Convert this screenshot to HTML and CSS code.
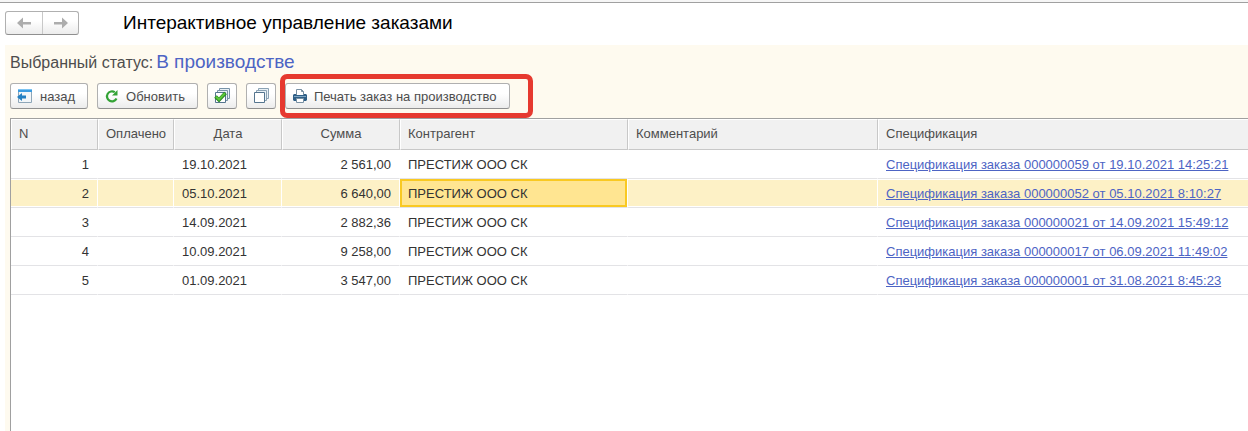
FILE: index.html
```html
<!DOCTYPE html>
<html lang="ru">
<head>
    <meta charset="UTF-8">
    <meta name="viewport" content="width=device-width, initial-scale=1.0">
    <title>Интерактивное управление заказами</title>
    <link rel="stylesheet" href="styles.css">
</head>
<body>
    <div class="tab-strip"></div>
    <header class="title-bar">
        <div class="nav">
            <button type="button" class="nav-btn" aria-label="Назад">
                <svg width="14" height="12" viewBox="0 0 14 12"><path d="M0 6L6 .5V5h8v2.500H6v4z" fill="#adadad"/></svg>
            </button>
            <button type="button" class="nav-btn" aria-label="Вперед">
                <svg width="14" height="12" viewBox="0 0 14 12"><path d="M14 6L8 .5V5H0v2.500h8v4z" fill="#adadad"/></svg>
            </button>
        </div>
        <h1>Интерактивное управление заказами</h1>
    </header>

    <main class="panel">
        <div class="status">
            <span>Выбранный статус:</span>
            <span class="status-value">В производстве</span>
        </div>

        <div class="toolbar">
            <button type="button" class="btn btn-back">
                <svg width="16" height="16" viewBox="0 0 16 16">
                    <path d="M1.500 3v11.500h13V3" fill="#f2f6f9" stroke="#8ea6b8"/>
                    <path d="M1 1h14v3H1z" fill="#3b9be0"/>
                    <path d="M1 1h14v1H1z" fill="#7cc4f2"/>
                    <path d="M0 9l5-4v2.500h4v3H5V13z" fill="#237fc2"/>
                </svg>
                назад
            </button>
            <button type="button" class="btn btn-refresh">
                <svg width="14" height="14" viewBox="0 0 14 14">
                    <path d="M9.800 3.200A5 5 0 1 0 11.500 9.500" fill="none" stroke="#34a336" stroke-width="2.200"/>
                    <path d="M12.500 1v5.500H7z" fill="#34a336"/>
                </svg>
                Обновить
            </button>
            <button type="button" class="btn btn-icon" aria-label="Установить флажки">
                <svg width="18" height="18" viewBox="0 0 18 18">
                    <g fill="#e9f1f6" stroke="#7893a8">
                        <path d="M6.500 1.500h10v10h-10z"/>
                        <path d="M4.500 3.500h10v10h-10z"/>
                        <path d="M2.500 5.500h10v10h-10z" fill="#fff" stroke="#55758f"/>
                    </g>
                    <path d="M2.500 9.500l3.500 3.500 6.500-7" fill="none" stroke="#268522" stroke-width="3.600"/>
                    <path d="M3 9.800l3 2.700 6-6.200" fill="none" stroke="#5cc93a" stroke-width="2"/>
                </svg>
            </button>
            <button type="button" class="btn btn-icon" aria-label="Снять флажки">
                <svg width="18" height="18" viewBox="0 0 18 18">
                    <g fill="#e9f1f6" stroke="#8ba2b4">
                        <path d="M6.500 1.500h10v10h-10z"/>
                        <path d="M4.500 3.500h10v10h-10z"/>
                        <path d="M2.500 5.500h10v10h-10z" fill="#fff" stroke="#55758f"/>
                    </g>
                </svg>
            </button>
            <div class="marked">
                <button type="button" class="btn btn-print">
                    <svg width="14" height="14" viewBox="0 0 14 14">
                        <path d="M3.500 6V.5h5l2 2V6" fill="#fff" stroke="#7890a3"/>
                        <path d="M8.500.5v2h2" fill="none" stroke="#7890a3"/>
                        <path d="M1 5h2v1h8V5h2l1 1v5l-1 1H1l-1-1V6z" fill="#2f5f86"/>
                        <path d="M1 7h12v1H1z" fill="#7ea6c4"/>
                        <path d="M3.500 9.500h7v4h-7z" fill="#fff" stroke="#7890a3"/>
                    </svg>
                    Печать заказ на производство
                </button>
            </div>
        </div>

        <div class="grid">
            <table class="orders">
                <colgroup>
                    <col class="col-n">
                    <col class="col-paid">
                    <col class="col-date">
                    <col class="col-sum">
                    <col class="col-agent">
                    <col class="col-comment">
                    <col>
                </colgroup>
                <thead>
                    <tr>
                        <th>N</th>
                        <th>Оплачено</th>
                        <th class="center">Дата</th>
                        <th class="center">Сумма</th>
                        <th>Контрагент</th>
                        <th>Комментарий</th>
                        <th>Спецификация</th>
                    </tr>
                </thead>
                <tbody>
                    <tr>
                        <td class="num">1</td>
                        <td></td>
                        <td>19.10.2021</td>
                        <td class="num">2 561,00</td>
                        <td>ПРЕСТИЖ ООО СК</td>
                        <td></td>
                        <td><a href="#">Спецификация заказа 000000059 от 19.10.2021 14:25:21</a></td>
                    </tr>
                    <tr class="selected">
                        <td class="num">2</td>
                        <td></td>
                        <td>05.10.2021</td>
                        <td class="num">6 640,00</td>
                        <td class="current">ПРЕСТИЖ ООО СК</td>
                        <td></td>
                        <td><a href="#">Спецификация заказа 000000052 от 05.10.2021 8:10:27</a></td>
                    </tr>
                    <tr>
                        <td class="num">3</td>
                        <td></td>
                        <td>14.09.2021</td>
                        <td class="num">2 882,36</td>
                        <td>ПРЕСТИЖ ООО СК</td>
                        <td></td>
                        <td><a href="#">Спецификация заказа 000000021 от 14.09.2021 15:49:12</a></td>
                    </tr>
                    <tr>
                        <td class="num">4</td>
                        <td></td>
                        <td>10.09.2021</td>
                        <td class="num">9 258,00</td>
                        <td>ПРЕСТИЖ ООО СК</td>
                        <td></td>
                        <td><a href="#">Спецификация заказа 000000017 от 06.09.2021 11:49:02</a></td>
                    </tr>
                    <tr>
                        <td class="num">5</td>
                        <td></td>
                        <td>01.09.2021</td>
                        <td class="num">3 547,00</td>
                        <td>ПРЕСТИЖ ООО СК</td>
                        <td></td>
                        <td><a href="#">Спецификация заказа 000000001 от 31.08.2021 8:45:23</a></td>
                    </tr>
                </tbody>
            </table>
        </div>
    </main>
</body>
</html>
```
FILE: styles.css
```css
* {
    box-sizing: border-box;
}

body {
    margin: 0;
    min-height: 100vh;
    display: flex;
    flex-direction: column;
    background: #fff;
    color: #333;
    font-family: "Liberation Sans", Arial, sans-serif;
    font-size: 13px;
}

.tab-strip {
    height: 3px;
    background: #f6f6f6;
    border-bottom: 1px solid #a0a0a0;
}

.title-bar {
    display: flex;
    align-items: center;
    gap: 44px;
    height: 42px;
    padding: 0 5px 2px;
}

.title-bar h1 {
    margin: 0;
    color: #000;
    font-size: 19px;
    font-weight: normal;
}

.nav {
    display: flex;
    height: 24px;
    border: 1px solid #b0b0b0;
    border-bottom-color: #8f8f8f;
    border-radius: 3px;
    background: linear-gradient(#fff 40%, #ececec);
}

.nav-btn {
    display: flex;
    align-items: center;
    justify-content: center;
    width: 36px;
    padding: 0;
    border: 0;
    background: none;
}

.nav-btn + .nav-btn {
    border-left: 1px solid #c8c8c8;
}

.panel {
    flex: 1;
    display: flex;
    flex-direction: column;
    margin-left: 5px;
    padding-left: 5px;
    background: #fefaef;
}

.status {
    display: flex;
    align-items: baseline;
    gap: 3px;
    padding-top: 5px;
    line-height: 24px;
    color: #4d4d4d;
    font-size: 16px;
}

.status-value {
    color: #4d64c4;
    font-size: 19px;
}

.toolbar {
    display: flex;
    gap: 9px;
    padding: 8px 0 9px;
}

.btn {
    display: flex;
    align-items: center;
    gap: 7px;
    height: 26px;
    padding: 0 13px 0 7px;
    border: 1px solid #b0b0b0;
    border-bottom-color: #8f8f8f;
    border-radius: 3px;
    background: linear-gradient(#fff 40%, #ececec);
    color: #4d4d4d;
    font: 13px "Liberation Sans", Arial, sans-serif;
    white-space: nowrap;
}

.btn-back {
    padding: 0 12px 0 6px;
}

.btn-refresh {
    padding-right: 12px;
}

.btn-icon {
    justify-content: center;
    width: 30px;
    padding: 0;
}

.marked {
    position: relative;
}

/* red frame around the print button */
.marked::after {
    content: "";
    position: absolute;
    inset: -9px -23px -9px -5px;
    border: 5px solid #e6392f;
    border-radius: 7px;
    pointer-events: none;
}

.grid {
    flex: 1;
    border-top: 1px solid #a0a0a0;
    border-left: 1px solid #a0a0a0;
    background: #fff;
}

.orders {
    width: 100%;
    table-layout: fixed;
    border-collapse: separate;
    border-spacing: 0;
}

.col-n { width: 87px; }
.col-paid { width: 76px; }
.col-date { width: 108px; }
.col-sum { width: 118px; }
.col-agent { width: 228px; }
.col-comment { width: 250px; }

.orders th {
    height: 31px;
    padding: 0 7px 2px;
    border: 1px solid #fff;
    border-right-color: #c8c8c8;
    border-bottom-color: #c8c8c8;
    background: #f1f1f1;
    color: #4d4d4d;
    font-weight: normal;
    text-align: left;
    white-space: nowrap;
}

.orders th:last-child {
    border-right: 0;
}

.orders th.center {
    text-align: center;
}

.orders td {
    height: 29px;
    padding: 0 8px;
    border-right: 1px solid #fff;
    border-bottom: 1px solid #e3e3e6;
    white-space: nowrap;
}

.orders td:last-child {
    border-right: 0;
}

.orders td.num {
    text-align: right;
}

.orders .selected td {
    background: #fdf1c6;
    box-shadow: inset 0 1px #fff, inset 0 -1px #fff;
}

.orders .selected .current {
    background: #ffe591;
    box-shadow: inset 0 0 0 2px #f9c922;
}

.orders a {
    color: #4d64c4;
}
```
